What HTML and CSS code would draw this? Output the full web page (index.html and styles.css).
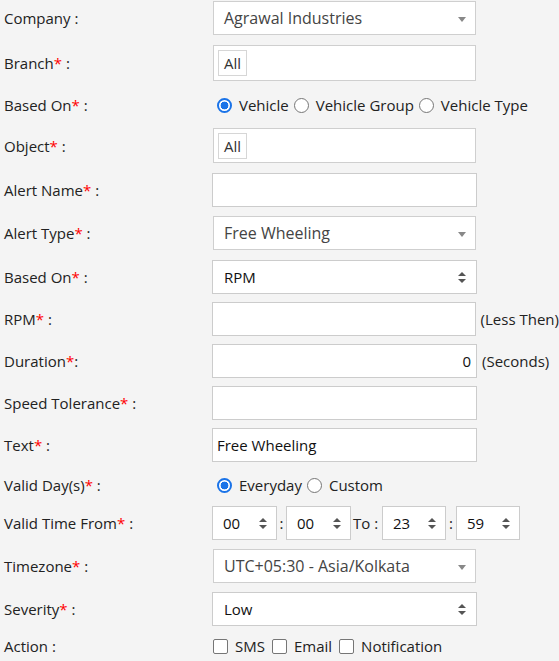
FILE: index.html
```html
<!DOCTYPE html>
<html>
<head>
<meta charset="utf-8">
<link rel="stylesheet" href="styles.css">
</head>
<body>
<form class="form">
  <div class="row sp10">
    <div class="label">Company :</div>
    <div class="s2">Agrawal Industries<span class="caret"></span></div>
  </div>
  <div class="row sp10">
    <div class="label">Branch<span class="req">*</span> :</div>
    <div class="tagbox"><span class="tag">All</span></div>
  </div>
  <div class="row radio-row sp9">
    <div class="label">Based On<span class="req">*</span> :</div>
    <div class="opts">
      <span class="radio on"></span><span class="opt">Vehicle</span>
      <span class="radio"></span><span class="opt">Vehicle Group</span>
      <span class="radio"></span><span class="opt">Vehicle Type</span>
    </div>
  </div>
  <div class="row sp10">
    <div class="label">Object<span class="req">*</span> :</div>
    <div class="tagbox tall"><span class="tag">All</span></div>
  </div>
  <div class="row sp9">
    <div class="label">Alert Name<span class="req">*</span> :</div>
    <div class="input"></div>
  </div>
  <div class="row sp10">
    <div class="label">Alert Type<span class="req">*</span> :</div>
    <div class="s2">Free Wheeling<span class="caret"></span></div>
  </div>
  <div class="row">
    <div class="label">Based On<span class="req">*</span> :</div>
    <div class="sel">RPM<span class="updn"></span></div>
  </div>
  <div class="row">
    <div class="label">RPM<span class="req">*</span> :</div>
    <div class="input"></div>
    <span class="suffix">(Less Then)</span>
  </div>
  <div class="row">
    <div class="label">Duration<span class="req">*</span>:</div>
    <div class="input num">0</div>
    <span class="suffix">(Seconds)</span>
  </div>
  <div class="row">
    <div class="label">Speed Tolerance<span class="req">*</span> :</div>
    <div class="input"></div>
  </div>
  <div class="row sp9">
    <div class="label">Text<span class="req">*</span> :</div>
    <div class="input">Free Wheeling</div>
  </div>
  <div class="row radio-row sp7">
    <div class="label">Valid Day(s)<span class="req">*</span> :</div>
    <div class="opts">
      <span class="radio on"></span><span class="opt">Everyday</span>
      <span class="radio"></span><span class="opt">Custom</span>
    </div>
  </div>
  <div class="row sp9">
    <div class="label">Valid Time From<span class="req">*</span> :</div>
    <div class="time">
      <div class="tsel">00<span class="updn"></span></div>
      <span class="colon">:</span>
      <div class="tsel">00<span class="updn"></span></div>
      <span class="to">To :</span>
      <div class="tsel narrow">23<span class="updn"></span></div>
      <span class="colon wide">:</span>
      <div class="tsel narrow">59<span class="updn"></span></div>
    </div>
  </div>
  <div class="row sp9">
    <div class="label">Timezone<span class="req">*</span> :</div>
    <div class="s2">UTC+05:30 - Asia/Kolkata<span class="caret"></span></div>
  </div>
  <div class="row sp6">
    <div class="label">Severity<span class="req">*</span> :</div>
    <div class="sel">Low<span class="updn"></span></div>
  </div>
  <div class="row radio-row">
    <div class="label">Action :</div>
    <div class="opts checks">
      <span class="check"></span><span class="opt">SMS</span>
      <span class="check"></span><span class="opt">Email</span>
      <span class="check"></span><span class="opt">Notification</span>
    </div>
  </div>
</form>
</body>
</html>
```
FILE: styles.css
```css
html, body {
  margin: 0;
  padding: 0;
  background: #f4f4f4;
}
body {
  font-family: "Open Sans", "Noto Sans", sans-serif;
  font-size: 15px;
  color: #222;
}
.form {
  padding: 1px 0 0 4px;
  margin: 0;
}
.row {
  display: flex;
  align-items: center;
  margin-bottom: 8px;
}
.sp10 { margin-bottom: 10px; }
.sp9 { margin-bottom: 9px; }
.sp7 { margin-bottom: 7px; }
.sp6 { margin-bottom: 6px; }
.radio-row { height: 28px; }
.label {
  width: 208px;
  flex: none;
  white-space: nowrap;
}
.req { color: #ff0000; }

.s2 {
  box-sizing: border-box;
  margin-left: 1px;
  width: 263px;
  height: 34px;
  border: 1px solid #cfcfcf;
  background: #fff;
  padding-left: 10px;
  color: #444;
  font-size: 16px;
  display: flex;
  align-items: center;
  position: relative;
}
.caret {
  position: absolute;
  right: 9px;
  top: 15px;
  width: 0;
  height: 0;
  border-left: 4px solid transparent;
  border-right: 4px solid transparent;
  border-top: 5px solid #888;
}
.tagbox {
  box-sizing: border-box;
  margin-left: 1px;
  width: 263px;
  height: 36px;
  border: 1px solid #cfcfcf;
  background: #fff;
  padding-left: 4px;
  display: flex;
  align-items: center;
}
.tagbox.tall { height: 35px; }
.tag {
  box-sizing: border-box;
  height: 26px;
  border: 1px solid #d6d6d6;
  padding: 0 5px;
  display: flex;
  align-items: center;
  color: #333;
}
.input {
  box-sizing: border-box;
  width: 265px;
  height: 34px;
  border: 1px solid #cccccc;
  background: #fff;
  padding: 0 4px;
  display: flex;
  align-items: center;
  color: #111;
}
.input.num { justify-content: flex-end; padding-right: 5px; }
.suffix {
  margin-left: 5px;
  white-space: nowrap;
}
.sel {
  box-sizing: border-box;
  width: 265px;
  height: 34px;
  border: 1px solid #cccccc;
  background: #fff;
  padding-left: 11px;
  display: flex;
  align-items: center;
  position: relative;
  color: #111;
}
.updn {
  position: absolute;
  right: 10px;
  top: 11px;
  width: 8px;
  height: 11px;
}
.updn::before, .updn::after {
  content: "";
  position: absolute;
  left: 0;
  width: 0;
  height: 0;
  border-left: 4px solid transparent;
  border-right: 4px solid transparent;
}
.updn::before { top: 0; border-bottom: 4px solid #555; }
.updn::after { bottom: 0; border-top: 4px solid #555; }

.opts {
  display: flex;
  align-items: center;
}
.radio {
  box-sizing: border-box;
  width: 15px;
  height: 15px;
  border-radius: 50%;
  border: 1px solid #767676;
  background: #fff;
  margin-left: 5px;
  margin-right: 7px;
  flex: none;
}
.opts .radio:first-child { margin-left: 5px; }
.opt + .radio { margin-left: 5px; }
.radio.on {
  border: 2px solid #1a73e8;
  background: radial-gradient(circle, #1a73e8 0 3.6px, #fff 4.2px);
}
.check {
  box-sizing: border-box;
  width: 15px;
  height: 15px;
  border: 1px solid #767676;
  border-radius: 2px;
  background: #fff;
  margin-right: 7px;
  flex: none;
}
.checks .check:first-child { margin-left: 1px; }
.opt + .check { margin-left: 7px; }

.time {
  display: flex;
  align-items: center;
}
.tsel {
  box-sizing: border-box;
  width: 65px;
  height: 34px;
  border: 1px solid #cccccc;
  background: #fff;
  padding-left: 10px;
  display: flex;
  align-items: center;
  position: relative;
  color: #111;
}
.tsel.narrow { width: 64px; }
.tsel .updn { right: 9px; }
.colon {
  width: 9px;
  text-align: center;
  flex: none;
}
.colon.wide { width: 10px; }
.to {
  width: 31px;
  padding-left: 2px;
  box-sizing: border-box;
  white-space: nowrap;
  flex: none;
}
```
